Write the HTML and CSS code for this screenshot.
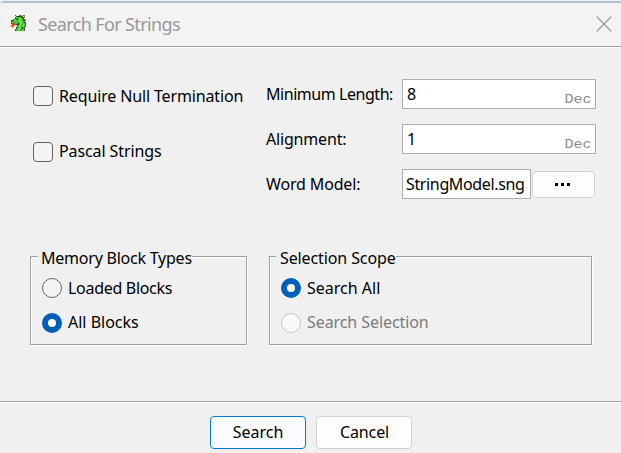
FILE: index.html
```html
<!DOCTYPE html>
<html lang="en">
<head>
<meta charset="utf-8">
<title>Search For Strings</title>
<link rel="stylesheet" href="styles.css">
</head>
<body>
<main class="dialog">
  <header class="titlebar">
    <svg class="dragon" viewBox="0 0 17 17" width="17" height="17" aria-hidden="true">
      <path fill="#43653a" d="M5 0h1v1h3V0h2v1h2v1h1v2h1v3h1v5h-1v4H5v-2h1v-2h1v-2H5v1H3V9H1V5h2V4h2V2h1V1H5z"/>
      <path fill="#43c42c" d="M6 2h5v1h2v2h1v3h1v4h-1v4H6v-2h1v-2h1V9H5V8H2V6h2V4h2z"/>
      <path fill="#70e54f" d="M4 5h3v1H4zM9 3h2v2h1v4h-1v3h-1v3H8v-2h1v-3h1V7H9zM13 9h1v3h-1z"/>
      <path fill="#e8422a" d="M2 8h3v1h1v1H3v1H1v-1h1z"/>
      <path fill="#f98b35" d="M0 11h3v1h1v1H2v-1H0z"/>
      <path fill="#23391e" d="M6 4h2v1H6zM2 5h1v1H2zM8 1h2v1H8zM11 2h2v1h-2zM13 4h1v2h-1zM14 7h1v1h-1zM8 8h1v2H8zM6 12h1v1H6zM12 12h1v2h-1z"/>
      <path fill="#a97d42" d="M12 0h3v1h-3zM14 1h1v2h-1zM15 4h1v2h-1z"/>
    </svg>
    <h1 class="title"><span>Search For Strings</span></h1>
    <svg class="close" viewBox="0 0 16 16" width="16" height="16" aria-label="Close"><path d="M.7.7l14.6 14.6M15.3.7L.7 15.3"/></svg>
  </header>
  <section class="content">
    <div class="options">
      <div class="checks">
        <label class="check"><i class="box"></i><span class="t-null">Require Null Termination</span></label>
        <label class="check"><i class="box"></i><span class="t-pascal">Pascal Strings</span></label>
      </div>
      <div class="fields">
        <div class="row"><span class="name"><span class="t-min">Minimum Length:</span></span><div class="input"><span>8</span><small>Dec</small></div></div>
        <div class="row"><span class="name"><span class="t-align">Alignment:</span></span><div class="input"><span>1</span><small>Dec</small></div></div>
        <div class="row"><span class="name"><span class="t-word">Word Model:</span></span><div class="input file"><span class="t-file">StringModel.sng</span></div><button class="browse" aria-label="Browse"><i></i><i></i><i></i></button></div>
      </div>
    </div>
    <div class="groups">
      <section class="group memory">
        <div class="legend"><span class="t-memory">Memory Block Types</span></div>
        <label class="radio"><i class="dot"></i><span class="t-loaded">Loaded Blocks</span></label>
        <label class="radio"><i class="dot on"></i><span class="t-all">All Blocks</span></label>
      </section>
      <section class="group scope">
        <div class="legend"><span class="t-scope">Selection Scope</span></div>
        <label class="radio"><i class="dot on"></i><span class="t-searchall">Search All</span></label>
        <label class="radio off"><i class="dot"></i><span class="t-selection">Search Selection</span></label>
      </section>
    </div>
  </section>
  <footer class="footer">
    <button class="btn primary"><span class="t-search">Search</span></button>
    <button class="btn"><span class="t-cancel">Cancel</span></button>
  </footer>
</main>
</body>
</html>
```
FILE: styles.css
```css
* { box-sizing: border-box; }
body { margin: 0; background: #f0f0f0; overflow: hidden; }
.dialog { width: 621px; height: 453px; display: flex; flex-direction: column; font: 16px/22px "Noto Sans", sans-serif; color: #000; white-space: nowrap; }
.dialog span { flex-shrink: 0; }
.titlebar { height: 48px; flex: none; display: flex; align-items: center; padding: 0 9px 0 10px; background: linear-gradient(#e6edf3 0 1px, #b3bfca 1px 3px, #f3f3f3 3px); border-bottom: 1px solid #fff; border-top-left-radius: 6px; box-shadow: inset 0 -1px #a0a0a0; }
.title { margin: 0 auto 0 11px; font: 18px/24px "Noto Sans", sans-serif; color: #999; letter-spacing: -.63px; }
.close { fill: none; stroke: #8b8b8b; stroke-width: 1.2; }
.content { height: 353px; flex: none; padding: 31px 25px 0 30px; }
.options { display: flex; }
.checks { width: 236px; padding: 7px 0 0 3px; display: flex; flex-direction: column; gap: 36px; }
.check { height: 20px; display: flex; align-items: center; gap: 6px; }
.box { width: 20px; height: 20px; border: 1px solid #626262; border-radius: 4px; background: #f5f5f5; }
.fields { display: flex; flex-direction: column; gap: 15px; }
.row { height: 30px; display: flex; align-items: center; }
.name { width: 136px; }
.input { width: 194px; height: 30px; display: flex; align-items: center; justify-content: space-between; border: 1px solid #abadb3; background: #fff; padding: 0 3px 0 4px; }
.input small { font: 12px/15px "Liberation Mono", monospace; color: #8c8c8c; margin: 13px 0 0; transform: scaleX(1.25); transform-origin: right; }
.file { width: 129px; padding-left: 3px; }
.browse { width: 63px; height: 27px; margin-left: 1px; padding: 0; border: 1px solid #d0d0d0; border-radius: 4px; background: #fdfdfd; display: flex; justify-content: center; align-items: center; gap: 3px; }
.browse i { width: 3px; height: 3px; background: #000; margin: 1px 1px 0 -1px; }
.groups { display: flex; gap: 22px; margin-top: 57px; }
.group { height: 89px; border: 1px solid #a0a0a0; box-shadow: 1px 1px #fff, inset 1px 1px #fff; padding: 0 11px; }
.memory { width: 217px; }
.scope { width: 323px; }
.legend { width: max-content; height: 22px; margin: -10px 0 9px -4px; padding-left: 3px; background: #f0f0f0; }
.scope .legend { margin-left: -5px; padding-left: 4px; }
.radio { height: 20px; display: flex; align-items: center; gap: 6px; margin-bottom: 15px; }
.radio + .radio span, .check + .check span { margin-bottom: 2px; }
.dot { width: 20px; height: 20px; flex: none; border: 1px solid #666; border-radius: 50%; background: #f5f5f5; }
.dot.on { border: 6px solid #005fb8; background: #fff; }
.off { color: #7b7b7b; }
.off .dot { border-color: #c5c5c5; background: #f9f9f9; }
.footer { flex: 1; display: flex; justify-content: center; gap: 10px; padding-top: 14px; border-top: 1px solid #a0a0a0; box-shadow: inset 0 1px #fff; }
.btn { width: 96px; height: 33px; padding: 0 0 2px; border: 1px solid #d0d0d0; border-radius: 4px; background: #fdfdfd; font: inherit; color: #000; }
.primary { border-color: #0078d4; background: #f9fbff; }
.t-null { letter-spacing: -.14px; }
.t-pascal { letter-spacing: -.1px; }
.t-min { letter-spacing: -.45px; }
.t-align { letter-spacing: -.18px; }
.t-word { letter-spacing: -.15px; }
.t-file { letter-spacing: -.36px; }
.t-memory { letter-spacing: -.23px; }
.t-loaded { letter-spacing: -.3px; }
.t-scope { letter-spacing: -.11px; }
.t-selection { letter-spacing: -.08px; }
.t-search { padding-left: 1px; }
.t-cancel { letter-spacing: -.1px; padding-left: 2px; }
```
